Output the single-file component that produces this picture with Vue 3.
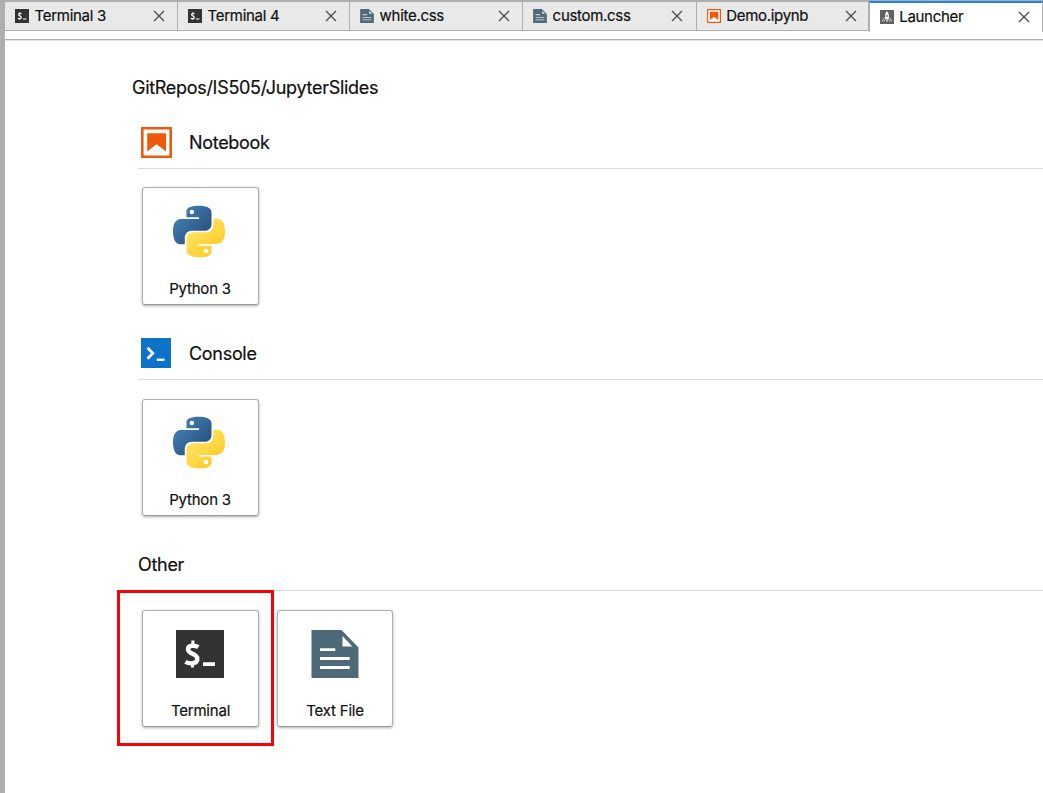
<script setup>
const tabs = [
  { name: 'Terminal 3', icon: 'terminal', cls: 't1' },
  { name: 'Terminal 4', icon: 'terminal', cls: 't2' },
  { name: 'white.css', icon: 'file', cls: 't3' },
  { name: 'custom.css', icon: 'file', cls: 't4' },
  { name: 'Demo.ipynb', icon: 'notebook', cls: 't5' },
  { name: 'Launcher', icon: 'launcher', cls: 't6 active' },
]
const sections = [
  { name: 'Notebook', icon: 'notebook', cards: [{ name: 'Python 3', icon: 'python', cls: 'py' }] },
  { name: 'Console', icon: 'console', cards: [{ name: 'Python 3', icon: 'python', cls: 'py' }] },
  {
    name: 'Other',
    icon: '',
    cards: [
      { name: 'Terminal', icon: 'terminal', cls: 'term', marked: true },
      { name: 'Text File', icon: 'file', cls: 'txt' },
    ],
  },
]
</script>

<template>
  <svg class="defs" width="0" height="0" aria-hidden="true">
    <defs>
      <linearGradient id="gBlue" x1="0" y1="0" x2="1" y2="1">
        <stop offset="0.1" stop-color="#4584b9" />
        <stop offset="0.8" stop-color="#28527f" />
      </linearGradient>
      <linearGradient id="gYellow" x1="0.9" y1="0.9" x2="0.2" y2="0.1">
        <stop offset="0.1" stop-color="#ffe564" />
        <stop offset="0.9" stop-color="#ffcc2d" />
      </linearGradient>
      <path id="snake" fill-rule="evenodd" d="M99.75 67.47C71.72 67.47 73.47 79.63 73.47 79.63L73.5 92.22H100.25V96H62.88S44.94 93.97 44.94 122.25C44.94 150.53 60.59 149.53 60.59 149.53H69.94V136.41S69.43 120.75 85.34 120.75H111.88S126.78 120.99 126.78 106.34V82.13S129.04 67.47 99.75 67.47ZM85 75.94A4.81 4.81 0 1 1 85 85.56A4.81 4.81 0 1 1 85 75.94Z" />
      <symbol id="python" viewBox="44.9 67.4 110.5 110">
        <use href="#snake" fill="url(#gBlue)" />
        <use href="#snake" fill="url(#gYellow)" transform="rotate(180 100.15 122.4)" />
      </symbol>
      <symbol id="terminal" viewBox="0 0 48 48">
        <path fill="#333" d="M0 0h48v48H0z" />
        <path fill="none" stroke="#fff" stroke-width="4.4" d="M22.4 17.2C19.3 15.2 12 14.8 12 19.2C12 24.3 21.4 23.2 21.4 28.8C21.4 34.4 13.3 34 9.4 31.8" />
        <path fill="#fff" d="M15.4 10.5h3v5h-3zM15 32.5h3v5h-3zM27 32.2h12v3.7H27z" />
      </symbol>
      <symbol id="file" viewBox="0 0 48 48">
        <path fill="#4e6a79" fill-rule="evenodd" d="M0.5 0H30.5L47.5 17.5V48H0.5ZM31.5 6V16.5H41.3ZM9 18.2V21H24.3V18.2ZM9 27V29.9H38.7V27ZM9 36V38.9H38.7V36Z" />
      </symbol>
      <symbol id="notebook" viewBox="0 0 31 31">
        <path fill="#fff" d="M0 0h31v31H0z" />
        <path fill="#ed5a0c" fill-rule="evenodd" d="M0 0H31V31H0ZM2.6 2.6V28.4H28.4V2.6ZM6.2 6.2H25V24.4L15.6 17.3L6.2 24.4Z" />
      </symbol>
      <symbol id="console" viewBox="0 0 30 30">
        <path fill="#0f72c9" d="M0 0h30v30H0z" />
        <path fill="none" stroke="#fff" stroke-width="2.7" d="M6.5 9.7L11.8 15.2L6.5 20.7" />
        <path fill="#fff" d="M15.8 20.6h7.7v2.3h-7.7z" />
      </symbol>
      <symbol id="launcher" viewBox="0 0 14 14">
        <path fill="#616161" d="M0 0h14v14H0z" />
        <path fill="#fff" fill-rule="evenodd" d="M7 1.2C8.4 2.5 8.8 4 8.8 5.5V9.4H5.2V5.5C5.2 4 5.6 2.5 7 1.2ZM6.2 5.2V6.8H7.8V5.2ZM6.2 10.2H7.8V11.4H6.2Z" />
        <path fill="none" stroke="#d4d4d4" stroke-width="0.9" d="M4.6 7.6L2 11.6M9.4 7.6L12 11.6M4.3 9.8V11.6M9.7 9.8V11.6" />
      </symbol>
    </defs>
  </svg>
  <div class="window">
    <nav class="tabs">
      <div v-for="t in tabs" :key="t.name" class="tab" :class="t.cls">
        <svg class="tab-icon"><use :href="'#' + t.icon" /></svg>
        <span class="tab-label">{{ t.name }}</span>
        <svg class="close" viewBox="0 0 12 12"><path d="M1 1L11 11M11 1L1 11" /></svg>
      </div>
    </nav>
    <div class="strip"></div>
    <main class="body">
      <div class="cwd">GitRepos/IS505/JupyterSlides</div>
      <section v-for="s in sections" :key="s.name" class="section">
        <header class="head">
          <svg v-if="s.icon" class="head-icon" :class="s.icon"><use :href="'#' + s.icon" /></svg>
          <h2>{{ s.name }}</h2>
        </header>
        <div class="cards">
          <div v-for="c in s.cards" :key="c.name" class="card" :class="c.cls">
            <svg class="card-icon"><use :href="'#' + c.icon" /></svg>
            <span class="card-label">{{ c.name }}</span>
            <div v-if="c.marked" class="marker"></div>
          </div>
        </div>
      </section>
    </main>
  </div>
</template>

<style>
body { margin: 0; background: #fff; overflow: hidden; }
</style>

<style scoped>
.defs { position: absolute; }
.window {
  box-sizing: border-box;
  width: 1043px;
  height: 793px;
  border-left: 5px solid #afafaf;
  border-top: 2px solid #afafaf;
  background: #fff;
  font-family: Inter, "Liberation Sans", sans-serif;
  color: #111;
  -webkit-text-stroke: 0.2px #111;
}
.tabs { display: flex; height: 29px; }
.tab {
  box-sizing: border-box;
  display: flex;
  align-items: center;
  width: 173px;
  height: 29px;
  padding: 0 12px 0 10px;
  background: #e9e9e9;
  border-right: 1px solid #afafaf;
  border-bottom: 1px solid #afafaf;
}
.t2 { width: 172px; }
.t4 { width: 174px; padding-right: 13px; }
.t5 { width: 172px; padding-right: 11px; }
.active {
  width: 174px;
  height: 31px;
  margin-top: -1px;
  padding-bottom: 1px;
  background: #fff;
  border-top: 2px solid #2185e8;
  border-left: 1px solid #afafaf;
  border-bottom: 0;
}
.tab-icon { width: 14px; height: 14px; margin-right: 6px; flex: none; }
.tab-label { flex: 1; font-size: 15px; line-height: 20px; letter-spacing: -0.3px; text-indent: -0.4px; white-space: nowrap; }
.t5 .tab-label, .t6 .tab-label { text-indent: -0.8px; }
.close { width: 12px; height: 12px; flex: none; }
.close path { stroke: #4f4f4f; stroke-width: 1.4; fill: none; }
.strip { height: 8px; border-bottom: 1px solid #b0b0b0; box-shadow: 0 1px 1px #e4e4e4; }
.body { padding: 35px 0 0 133px; }
.cwd {
  height: 25px;
  margin-left: -6px;
  font-size: 18px;
  line-height: 25px;
  letter-spacing: -0.3px;
}
.section { height: 211px; }
.body .cwd + .section { margin-top: 18px; }
.head {
  box-sizing: border-box;
  display: flex;
  align-items: center;
  height: 51px;
  border-bottom: 1px solid #d9d9d9;
}
.head-icon { width: 31px; height: 31px; margin: 0 17px 2px 3px; }
.head-icon.console { width: 30px; height: 30px; margin-right: 18px; }
h2 { margin: 0; font-size: 18px; font-weight: 400; line-height: 24px; letter-spacing: -0.3px; }
.cards { display: flex; gap: 18px; padding: 18px 0 0 4px; }
.card {
  box-sizing: border-box;
  position: relative;
  display: flex;
  flex-direction: column;
  align-items: center;
  width: 117px;
  height: 118px;
  border: 1px solid #b0b0b0;
  border-bottom-color: #999;
  border-radius: 3px;
  box-shadow: 0 1px 3px rgba(0, 0, 0, 0.32);
}
.section + .section .cards { padding-top: 19px; }
.card-icon { width: 48px; height: 48px; margin-top: 19px; margin-right: 2px; }
.txt { width: 116px; }
.txt .card-icon { margin-right: 1px; }
.py .card-icon { width: 52px; height: 53px; margin-top: 17px; margin-right: 3px; }
.card-label { margin-top: 23px; font-size: 15px; line-height: 20px; letter-spacing: -0.2px; white-space: nowrap; }
.py .card-label { margin-top: 21px; margin-right: 1px; }
.section + .section .card { height: 117px; }
.section + .section .py .card-icon { margin-top: 16px; }
.marker {
  position: absolute;
  box-sizing: border-box;
  left: -26px;
  top: -21px;
  width: 157px;
  height: 156px;
  border: 3px solid #fb0007;
}
</style>
